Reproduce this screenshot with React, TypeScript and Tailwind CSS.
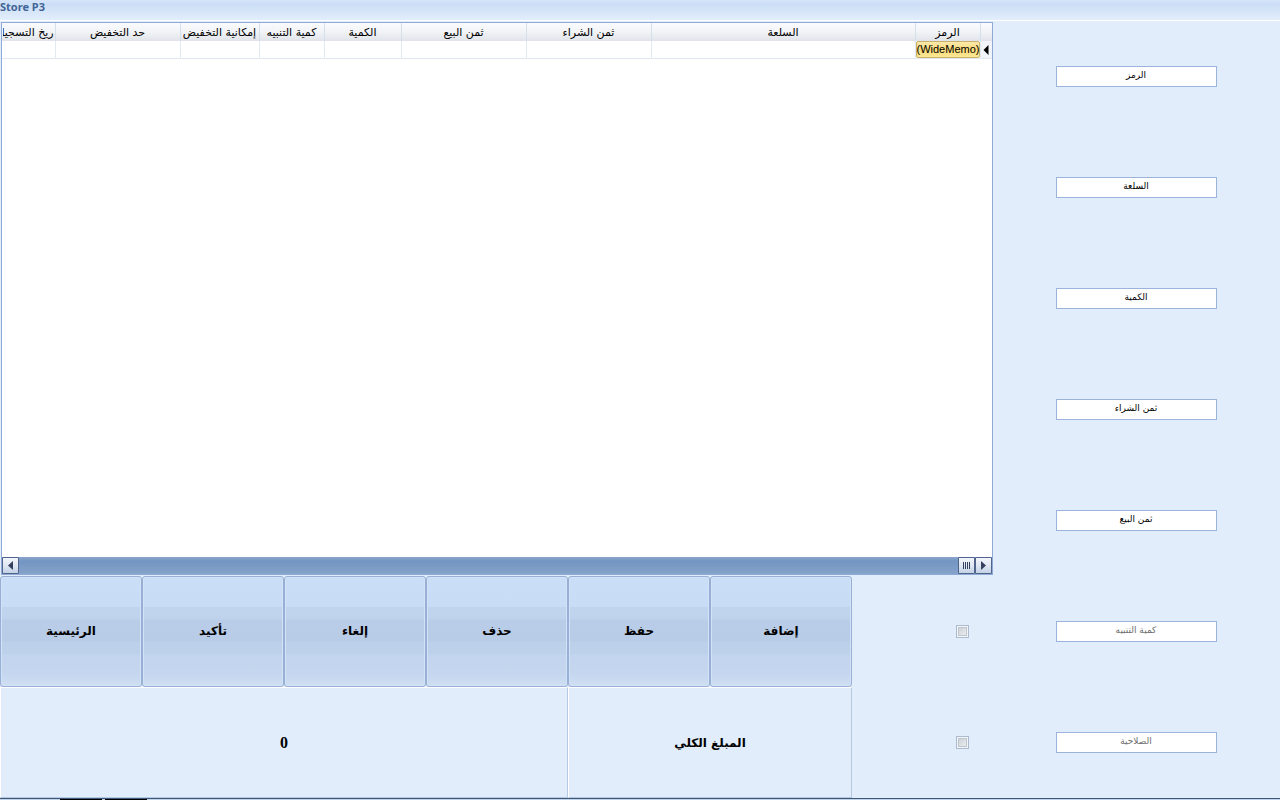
import { clsx } from "clsx"

interface Column {
  title: string
  width: string
}

interface Field {
  label: string
  optional?: boolean
}

const columns: Column[] = [
  { title: "الرمز", width: "w-[65px]" },
  { title: "السلعة", width: "" },
  { title: "ثمن الشراء", width: "w-[125px]" },
  { title: "ثمن البيع", width: "w-[125px]" },
  { title: "الكمية", width: "w-[77px]" },
  { title: "كمية التنبيه", width: "w-[65px]" },
  { title: "إمكانية التخفيض", width: "w-[79px]" },
  { title: "حد التخفيض", width: "w-[125px]" },
  { title: "تاريخ التسجيل", width: "w-[53px]" },
]

const actions = ["إضافة", "حفظ", "حذف", "إلغاء", "تأكيد", "الرئيسية"]

const fields: Field[] = [
  { label: "الرمز" },
  { label: "السلعة" },
  { label: "الكمية" },
  { label: "ثمن الشراء" },
  { label: "ثمن البيع" },
  { label: "كمية التنبيه", optional: true },
  { label: "الصلاحية", optional: true },
]

function StockTable() {
  return (
    <table className="w-full table-fixed border-collapse text-[11px] leading-[14px] text-black">
      <thead>
        <tr className="h-[18px] bg-linear-to-b from-[#fafbfd] via-[#f1f3f6] to-[#e0e4ea]">
          <th aria-label="المؤشر" className="w-[12px] border-l border-[#d5dfec] p-0" />
          {columns.map((col) => (
            <th
              key={col.title}
              className={clsx("border-l border-[#d5dfec] p-0 pt-[2px] font-normal last:border-l-0", col.width)}
            >
              <div className="mx-px flex justify-center overflow-hidden whitespace-nowrap">
                <span className="shrink-0">{col.title}</span>
              </div>
            </th>
          ))}
        </tr>
      </thead>
      <tbody>
        <tr className="h-[17px] border-b border-[#e1e8f2]">
          <td className="border-l border-[#e3e9f2] bg-[#f1f4f9] p-0">
            <svg width="6" height="10" viewBox="0 0 6 10" className="mx-auto">
              <path d="M5.5 0V10L0.5 5Z" fill="#000" />
            </svg>
          </td>
          <td className="border-l border-[#e3e9f2] p-0">
            <div
              dir="ltr"
              className="h-[17px] rounded-[2px] border border-[#c9b16a] bg-linear-to-b from-[#fbe9ab] via-[#fadb78] to-[#fce793] text-center font-['Liberation_Sans',sans-serif] leading-[15px] whitespace-nowrap"
            >
              (WideMemo)
            </div>
          </td>
          {columns.slice(1).map((col) => (
            <td key={col.title} className="border-l border-[#e3e9f2] p-0 last:border-l-0" />
          ))}
        </tr>
      </tbody>
    </table>
  )
}

// Button at either end of the scroll track, and the thumb between them
function ScrollButton({ label, path }: { label: string; path: string }) {
  return (
    <button
      type="button"
      aria-label={label}
      className="flex size-[17px] items-center justify-center rounded-[1px] border border-[#50648c] bg-linear-to-b from-[#f3f6fb] via-[#dfe7f2] via-50% to-[#c3d2e6]"
    >
      <svg width="11" height="11" viewBox="0 0 11 11" fill="#35405e" stroke="none">
        <path d={path} />
      </svg>
    </button>
  )
}

function ScrollBar() {
  return (
    <div dir="ltr" className="flex h-[17px] bg-linear-to-b from-[#8aa5cb] via-[#7395c2] via-25% to-[#86a3ca]">
      <ScrollButton label="Scroll left" path="M8 1V10L3 5.5Z" />
      <div className="flex-1" />
      <ScrollButton label="Scroll thumb" path="M2 2h1v7h-1zM4 2h1v7h-1zM6 2h1v7h-1zM8 2h1v7h-1z" />
      <ScrollButton label="Scroll right" path="M3 1V10L8 5.5Z" />
    </div>
  )
}

function FieldRow({ label, optional }: Field) {
  return (
    <div className="col-span-2 flex items-center justify-center">
      <input
        type="text"
        aria-label={label}
        defaultValue={label}
        disabled={optional}
        className="h-[21px] w-[161px] border border-[#9ab4dc] bg-white pb-[3px] text-center text-[9px] leading-[14px] text-black disabled:text-[#6d6d6d]"
      />
    </div>
  )
}

export default function App() {
  return (
    <div className="flex h-screen flex-col bg-[#e1edfb] font-['DejaVu_Sans',sans-serif]">
      <header className="h-[21px] border-b border-white bg-linear-to-b from-[#d6e5f9] via-[#cbdef6] via-20% to-[#e3eefb]">
        <h1 className="font-['Noto_Sans',sans-serif] text-[11px] leading-[13px] font-bold text-[#416596]">Store P3</h1>
      </header>

      {/* Nine equal columns, seven equal rows */}
      <main dir="rtl" className="grid min-h-0 flex-1 grid-cols-9 grid-rows-7 pr-[2px]">
        <section className="col-span-2 row-span-7 grid grid-cols-2 grid-rows-7">
          {fields.map((field) => (
            <FieldRow key={field.label} {...field} />
          ))}
        </section>

        <section className="col-span-7 row-span-5 p-px">
          <div className="flex h-full flex-col border border-[#8faad6] bg-white">
            <div className="min-h-0 flex-1 overflow-hidden">
              <StockTable />
            </div>
            <ScrollBar />
          </div>
        </section>

        <section className="row-span-2 grid grid-rows-2">
          {fields
            .filter((field) => field.optional)
            .map((field) => (
              <div key={field.label} className="flex items-center pr-[25px]">
                <input
                  type="checkbox"
                  aria-label={field.label}
                  disabled
                  className="size-[13px] appearance-none border border-[#abbacd] bg-linear-to-br from-[#c5cbd2] to-[#f2f4f6] shadow-[inset_0_0_0_1px_#f2f6fb,inset_0_0_0_2px_#c0c6ce]"
                />
              </div>
            ))}
        </section>

        {actions.map((action) => (
          <button
            key={action}
            type="button"
            className="rounded-[3px] border border-[#98b0d5] bg-[linear-gradient(#cadef7,#c8dcf5_27%,#c1d4ee_28%,#c0d3ed_38%,#b9cce8_40%,#b8cbe7_58%,#bdd0ea_60%,#bed1eb_70%,#c3d5ee_72%,#c5d7ef_90%,#d0dff2)] pb-[2px] text-[12px] leading-[18px] font-bold text-black shadow-[inset_0_0_0_1px_#d3e2f6]"
          >
            {action}
          </button>
        ))}

        <div className="col-span-2 flex items-center justify-center border border-t-white border-r-[#b5c9e2] border-b-[#b5c9e2] border-l-white text-[12px] leading-[18px] font-bold text-black">
          المبلغ الكلي
        </div>
        <output className="col-span-4 flex items-center justify-center border border-t-white border-r-[#b5c9e2] border-b-[#b5c9e2] border-l-white font-['Liberation_Serif',serif] text-[16px] leading-[18px] font-bold text-black">
          0
        </output>
      </main>

      <footer dir="ltr" className="flex h-[2px] gap-[3px] border-t border-[#3d5878] bg-[#c1d3e8] pl-[60px]">
        <div className="w-[42px] bg-black" />
        <div className="w-[42px] bg-black" />
      </footer>
    </div>
  )
}
